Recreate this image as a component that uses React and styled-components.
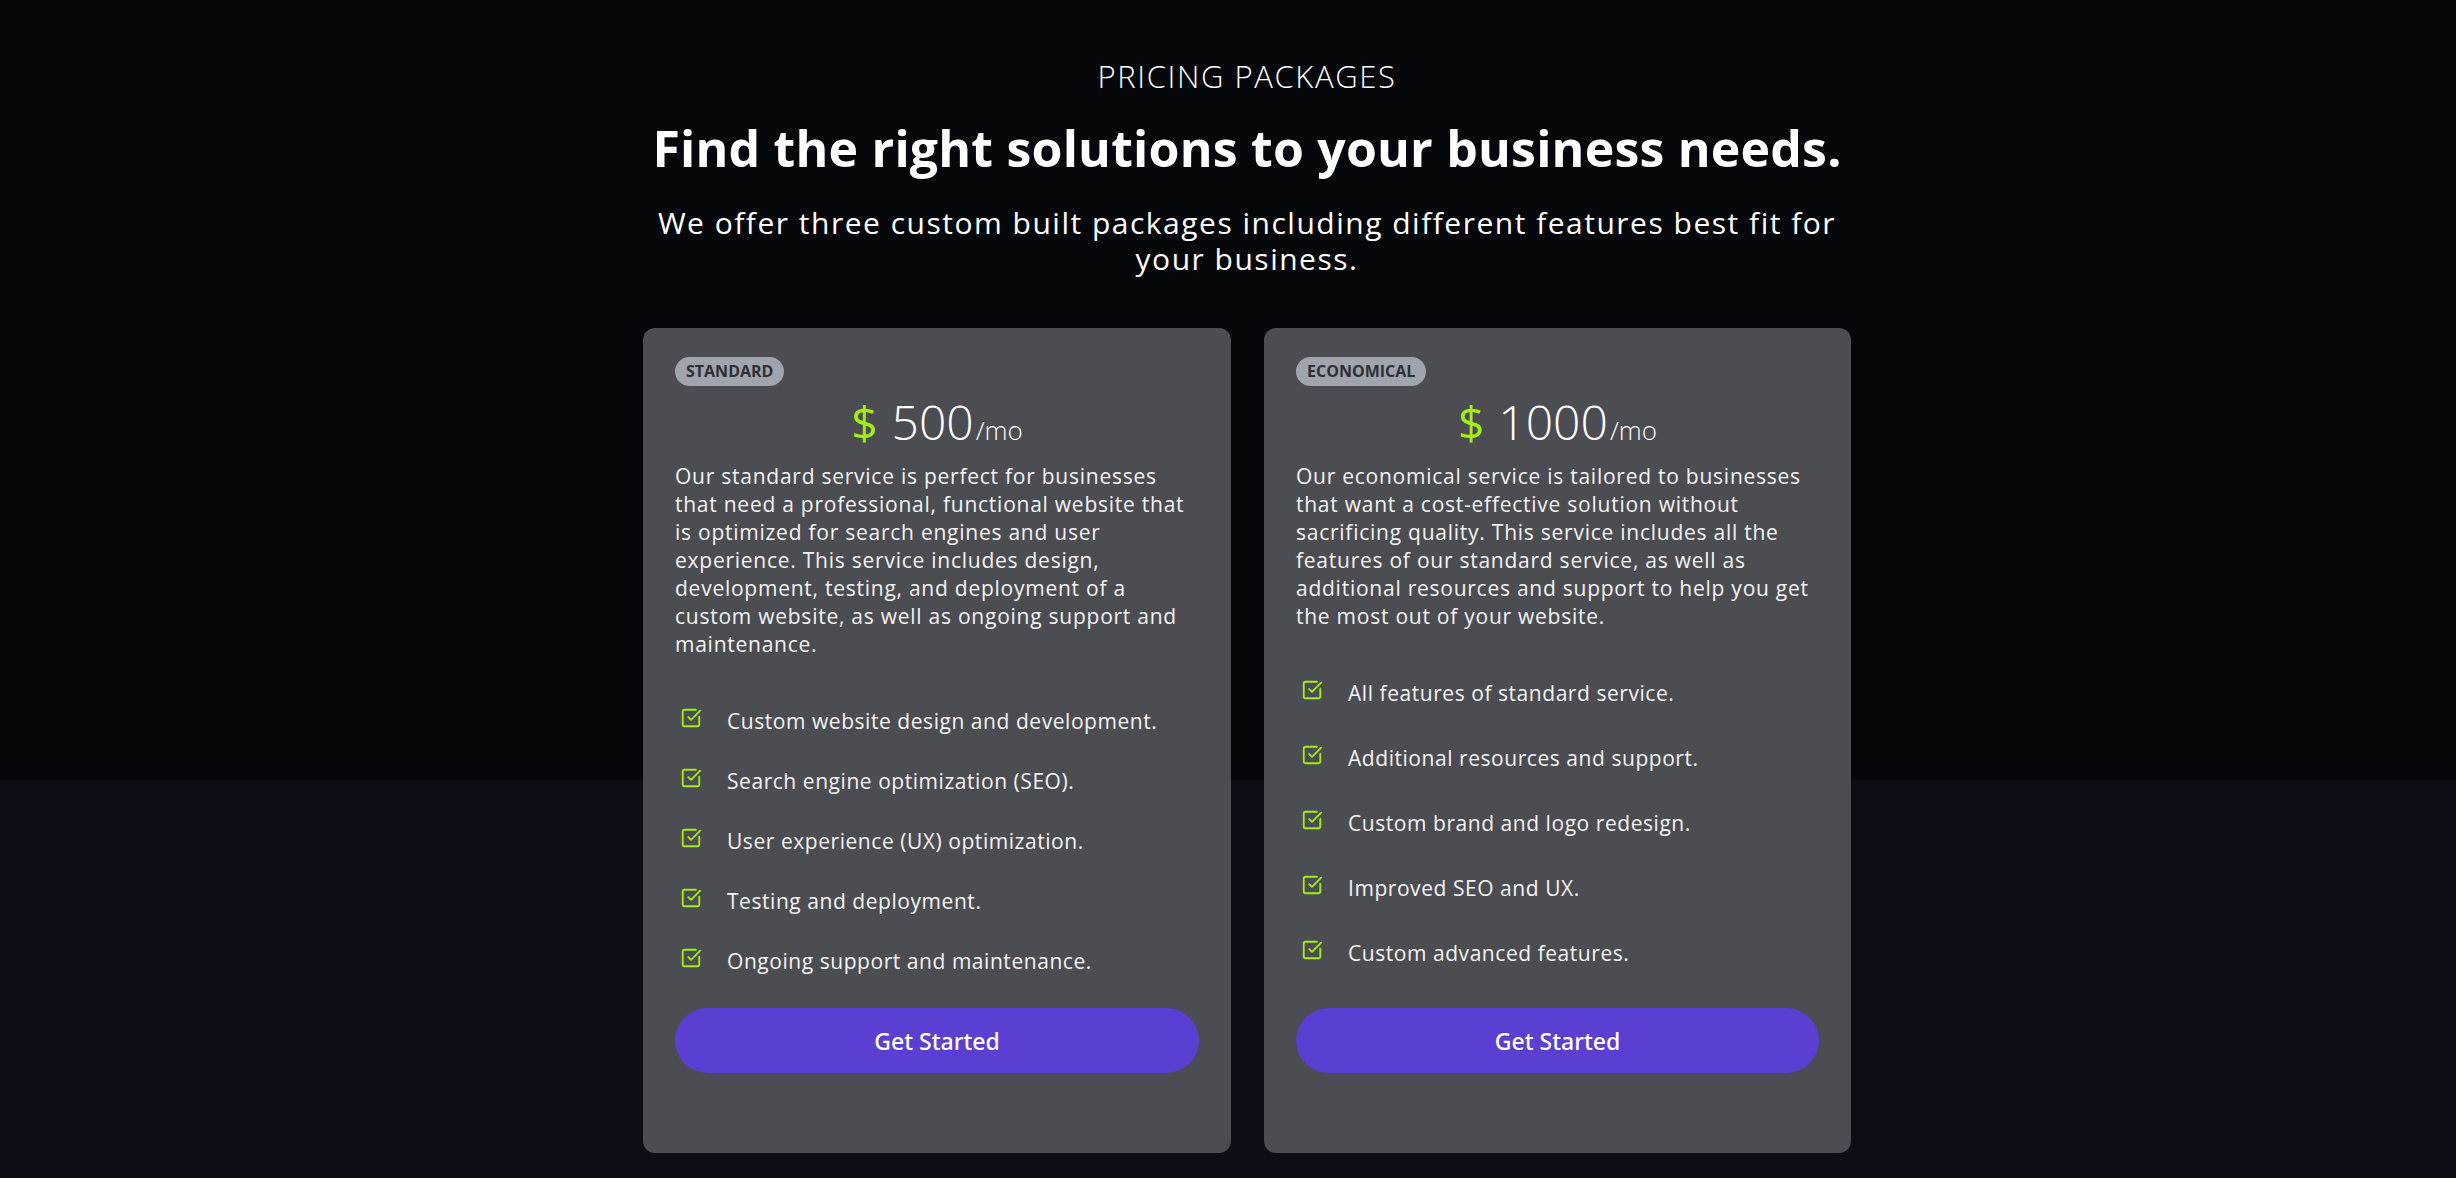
import React from "react";
import styled, { createGlobalStyle } from "styled-components";
import { SquareCheckBig } from "lucide-react";

const LIME = "#a3ef10";

const GlobalStyle = createGlobalStyle`
  * {
    box-sizing: border-box;
  }
  html,
  body {
    margin: 0;
    padding: 0;
  }
  body {
    background: #0b0e15;
    color: #ffffff;
    font-family: "Open Sans", "Noto Sans", sans-serif;
  }
`;

//layout
const Page = styled.main`
  min-height: 100vh;
  background: linear-gradient(
    to bottom,
    #06070b 0,
    #06070b 780px,
    #0b0e15 780px
  );
  padding: 59px 0 24px 38px;
  display: flex;
  flex-direction: column;
  align-items: center;
`;

const Eyebrow = styled.p`
  margin: 0;
  font-size: 31px;
  line-height: 34px;
  font-weight: 300;
  letter-spacing: 1.6px;
`;

const Title = styled.h1`
  margin: 26px 0 0;
  font-size: 50px;
  line-height: 58px;
  font-weight: 700;
  letter-spacing: 0.2px;
`;

const Lead = styled.p`
  margin: 28px 0 0;
  max-width: 1220px;
  text-align: center;
  font-size: 30px;
  line-height: 36px;
  font-weight: 400;
  letter-spacing: 1.5px;
`;

const CardRow = styled.section`
  margin-top: 51px;
  display: grid;
  grid-template-columns: 588px 587px;
  gap: 33px;
`;

const Card = styled.article`
  background: #4c4d52;
  border-radius: 12px;
  padding: 29px 32px 80px;
  display: flex;
  flex-direction: column;
`;

const Badge = styled.span`
  align-self: flex-start;
  height: 29px;
  padding: 0 11px;
  border-radius: 999px;
  background: #a0a4ad;
  color: #2e3035;
  font-size: 16px;
  line-height: 29px;
  font-weight: 700;
  text-transform: uppercase;
`;

const Price = styled.div`
  margin-top: 12px;
  display: flex;
  justify-content: center;
  align-items: baseline;
  line-height: 1;
  font-weight: 300;
`;

const Dollar = styled.span`
  color: ${LIME};
  font-size: 46px;
  font-weight: 400;
  margin-right: 14px;
`;

const Amount = styled.span`
  font-size: 48px;
`;

const Per = styled.span`
  font-size: 26px;
  margin-left: 2px;
`;

const Description = styled.p`
  margin: 16px 0 0;
  font-size: 21px;
  line-height: 28px;
  letter-spacing: 0.75px;
  color: #f4f4f5;
`;

const Features = styled.ul`
  list-style: none;
  margin: 49px 0 33px;
  padding: 0;
  display: flex;
  flex-direction: column;
  gap: ${(p) => p.$gap}px;
`;

const Feature = styled.li`
  display: flex;
  align-items: center;
  gap: 25px;
  padding-left: 5px;
  font-size: 21px;
  line-height: 28px;
  letter-spacing: 0.55px;
  color: #f4f4f5;
`;

const Check = styled(SquareCheckBig)`
  flex-shrink: 0;
  margin-bottom: 6px;
`;

const Button = styled.button`
  margin-top: auto;
  width: 100%;
  height: 65px;
  border: none;
  border-radius: 999px;
  background: #5b3fd3;
  color: #ffffff;
  font-family: "Noto Sans", sans-serif;
  font-size: 23px;
  font-weight: 500;
  cursor: pointer;
`;

const packages = [
  {
    name: "standard",
    price: "500",
    gap: 32,
    text: "Our standard service is perfect for businesses that need a professional, functional website that is optimized for search engines and user experience. This service includes design, development, testing, and deployment of a custom website, as well as ongoing support and maintenance.",
    features: [
      "Custom website design and development.",
      "Search engine optimization (SEO).",
      "User experience (UX) optimization.",
      "Testing and deployment.",
      "Ongoing support and maintenance.",
    ],
  },
  {
    name: "economical",
    price: "1000",
    gap: 37,
    text: "Our economical service is tailored to businesses that want a cost-effective solution without sacrificing quality. This service includes all the features of our standard service, as well as additional resources and support to help you get the most out of your website.",
    features: [
      "All features of standard service.",
      "Additional resources and support.",
      "Custom brand and logo redesign.",
      "Improved SEO and UX.",
      "Custom advanced features.",
    ],
  },
];

const PricingCard = ({ pkg }) => (
  <Card>
    <Badge>{pkg.name}</Badge>
    <Price>
      <Dollar>$</Dollar>
      <Amount>{pkg.price}</Amount>
      <Per>/mo</Per>
    </Price>
    <Description>{pkg.text}</Description>
    <Features $gap={pkg.gap}>
      {pkg.features.map((f) => (
        <Feature key={f}>
          <Check size={22} color={LIME} strokeWidth={2} />
          {f}
        </Feature>
      ))}
    </Features>
    <Button type="button">Get Started</Button>
  </Card>
);

const App = () => {
  return (
    <>
      <GlobalStyle />
      <Page>
        <Eyebrow>PRICING PACKAGES</Eyebrow>
        <Title>Find the right solutions to your business needs.</Title>
        <Lead>
          We offer three custom built packages including different features
          best fit for your business.
        </Lead>
        <CardRow>
          {packages.map((p) => (
            <PricingCard key={p.name} pkg={p} />
          ))}
        </CardRow>
      </Page>
    </>
  );
};

export default App;
